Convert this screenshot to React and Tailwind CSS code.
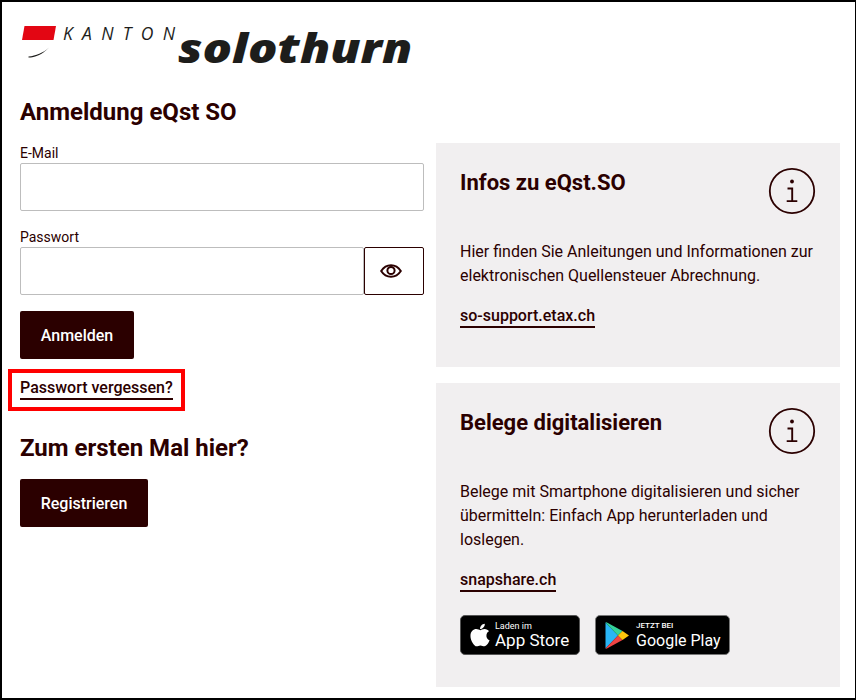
import React from "react";
import { FaApple } from "react-icons/fa";

const InfoIcon = () => (
  <svg width="48" height="48" viewBox="0 0 48 48" fill="none" stroke="#2b0000" className="shrink-0">
    <circle cx="24" cy="24" r="22.2" strokeWidth="1.8" />
    <circle cx="24" cy="14.5" r="1.9" fill="#2b0000" stroke="none" />
    <path d="M19.5 21.5H24.2V34M18.7 34.100H29.300" strokeWidth="1.9" />
  </svg>
);

const EyeIcon = () => (
  <svg width="22" height="14" viewBox="0 0 22 14" fill="none" stroke="#2b0000" strokeWidth="2">
    <path d="M1.2 7C3.6 3.2 7 1.2 11 1.2S18.4 3.2 20.8 7C18.4 10.800 15 12.800 11 12.800S3.600 10.800 1.200 7Z" />
    <circle cx="11" cy="6.500" r="3.600" />
  </svg>
);

const PlayIcon = () => (
  <svg width="24" height="27" viewBox="0 0 24 27">
    <path d="M0.500 0.500V26.500L13 13.500Z" fill="#29b6f6" />
    <path d="M0.500 0.500L13 13.500L17.500 9L1.500 0.200Z" fill="#34d399" />
    <path d="M0.500 26.500L13 13.500L17.500 18L1.500 26.800Z" fill="#ef4444" />
    <path d="M17.500 9L24 13.500L17.500 18L13 13.500Z" fill="#fdc70c" />
  </svg>
);

function Logo() {
  return (
    <div className="flex h-[50px] items-start">
      <div className="flex w-[42px] shrink-0 flex-col pl-[2px] pt-[6px]">
        <svg width="34" height="32" viewBox="0 0 34 32">
          <path d="M2.500 0H34L31.500 14H0Z" fill="#e30613" />
          <path d="M6.500 31.500C13 31.500 20 29 27 21.500C21 27 14 29.800 6.500 30.500Z" fill="#1d1d1b" />
        </svg>
      </div>
      <span className="mt-[3px] w-[116px] shrink-0 pl-[1px] font-['Open_Sans',sans-serif] text-[17.500px] leading-[20px] whitespace-nowrap text-[#1d1d1b] italic tracking-[9.300px]">
        KANTON
      </span>
      <span className="mt-[3px] origin-left scale-x-[1.19] font-['Open_Sans',sans-serif] text-[41px] leading-[48px] font-extrabold whitespace-nowrap text-[#1d1d1b] italic">
        solothurn
      </span>
    </div>
  );
}

function TextLink({ children }) {
  return (
    <a className="inline-block border-b-2 border-[#2b0000] text-[16px] leading-[21px] font-medium text-[#2b0000]">
      {children}
    </a>
  );
}

function InfoCard({ title, className, children }) {
  return (
    <section className={`bg-[#f1eff0] px-6 pt-6 ${className}`}>
      <div className="flex items-start justify-between">
        <h2 className="pt-[1px] text-[22px] leading-[30px] font-bold">{title}</h2>
        <InfoIcon />
      </div>
      {children}
    </section>
  );
}

export default function App() {
  return (
    <div className="relative h-[700px] w-[856px] overflow-hidden border-2 border-r border-black bg-white font-['Roboto',sans-serif] text-[#2b0000]">
      <div className="pl-[18px] pt-[18px]">
        <Logo />
        <div className="grid grid-cols-[404px_404px] gap-x-3">
          <div className="pt-[24px]">
            <h1 className="text-[24px] leading-[36px] font-bold">Anmeldung eQst SO</h1>
            <label className="mt-[13px] block text-[14px] leading-[20px]">E-Mail</label>
            <div className="h-[48px] rounded-[2px] border border-[#bdbdbd]" />
            <label className="mt-[16px] block text-[14px] leading-[20px]">Passwort</label>
            <div className="flex h-[48px]">
              <div className="flex-1 rounded-[2px] border border-[#bdbdbd]" />
              <button className="flex w-[60px] items-center justify-center rounded-[2px] border border-[#2b0000] pr-[6px]">
                <EyeIcon />
              </button>
            </div>
            <button className="mt-4 h-[48px] w-[114px] rounded-[2px] bg-[#2b0000] pt-[2px] text-[16px] font-medium text-white">
              Anmelden
            </button>
            <div className="mt-[17px]">
              <TextLink>Passwort vergessen?</TextLink>
            </div>
            <h2 className="mt-[30px] text-[24px] leading-[36px] font-bold">Zum ersten Mal hier?</h2>
            <button className="mt-[13px] h-[48px] w-[128px] rounded-[2px] bg-[#2b0000] pt-[2px] text-[16px] font-medium text-white">
              Registrieren
            </button>
          </div>

          <div className="flex flex-col gap-4 pt-[73px]">
            <InfoCard title="Infos zu eQst.SO" className="h-[224px]">
              <p className="mt-[25px] text-[16px] leading-[24px]">
                Hier finden Sie Anleitungen und Informationen zur
                <br />
                elektronischen Quellensteuer Abrechnung.
              </p>
              <div className="mt-[16px]">
                <TextLink>so-support.etax.ch</TextLink>
              </div>
            </InfoCard>
            <InfoCard title="Belege digitalisieren" className="h-[304px]">
              <p className="mt-[25px] text-[16px] leading-[24px]">
                Belege mit Smartphone digitalisieren und sicher
                <br />
                übermitteln: Einfach App herunterladen und
                <br />
                loslegen.
              </p>
              <div className="mt-[16px]">
                <TextLink>snapshare.ch</TextLink>
              </div>
              <div className="mt-[23px] flex gap-[15px]">
                <div className="flex h-[40px] w-[120px] items-center rounded-[5px] border border-[#555] bg-black pl-[6px] text-white">
                  <FaApple className="text-[26px]" />
                  <div className="ml-[2px] flex flex-col whitespace-nowrap pt-[2px]">
                    <span className="text-[9px] leading-[9px]">Laden im</span>
                    <span className="text-[17px] leading-[19px]">App Store</span>
                  </div>
                </div>
                <div className="flex h-[40px] w-[135px] items-center rounded-[5px] border border-[#777] bg-black pl-[9px] text-white">
                  <PlayIcon />
                  <div className="ml-[7px] flex flex-col whitespace-nowrap pt-[2px]">
                    <span className="text-[8px] leading-[8px] font-medium">JETZT BEI</span>
                    <span className="text-[16px] leading-[21px]">Google Play</span>
                  </div>
                </div>
              </div>
            </InfoCard>
          </div>
        </div>
      </div>

      {/* red annotation box around the link */}
      <div className="absolute left-[6px] top-[367px] h-[42px] w-[177px] border-4 border-[#ff0000]" />
    </div>
  );
}
